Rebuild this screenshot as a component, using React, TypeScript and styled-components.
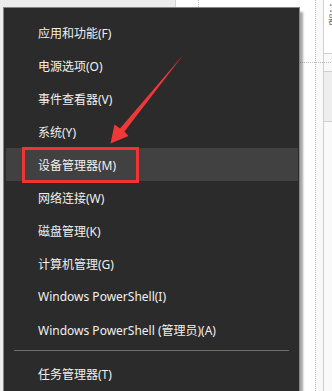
import React from "react";
import styled, { createGlobalStyle } from "styled-components";

const Global = createGlobalStyle`
  html, body { margin: 0; padding: 0; }
  body { width: 332px; height: 391px; overflow: hidden; background: #ffffff; }
`;

const Page = styled.div`
  position: relative;
  width: 332px;
  height: 391px;
  overflow: hidden;
  font-family: "Noto Sans", "Noto Sans CJK SC", sans-serif;
`;

const Backdrop = styled.div`
  display: flex;
  height: 100%;
`;

const LeftPane = styled.div`
  width: 175px;
  flex: none;
  background: #ececec;
  border-right: 1px solid #d6d6d6;
`;

const MidPane = styled.div`
  width: 147px;
  flex: none;
  display: flex;
  background: #ffffff;
`;

const Gutter = styled.div<{ $w: number; $dotted?: boolean; $bg?: string }>`
  width: ${(p) => p.$w}px;
  flex: none;
  background: ${(p) => p.$bg || "transparent"};
  border-left: ${(p) => (p.$dotted ? "1px dotted #b8b8b8" : "none")};
`;

const HDots = styled.div`
  height: 62px;
  border-bottom: 1px dotted #b8b8b8;
`;

const RightPane = styled.div`
  flex: 1;
  display: flex;
  flex-direction: column;
  position: relative;
  background: #f9f9f9;
  border-left: 1px solid #cfcfcf;
`;

const TopBox = styled.div`
  height: 54px;
  background: #ffffff;
  border-bottom: 1px solid #cfcfcf;
  display: flex;
  flex-direction: column;
  padding: 1px 0 0 4px;
  box-sizing: border-box;
  font-family: "Noto Sans CJK SC", sans-serif;
  font-size: 11px;
  line-height: 12px;
  color: #777;
  overflow: hidden;
  white-space: nowrap;
`;

const BoxGap = styled.div`
  height: 17px;
  display: flex;
  flex-direction: column;
  justify-content: center;
`;

const Dots = styled.div`
  border-top: 1px dotted #b8b8b8;
`;

const GreyBox = styled.div`
  height: 49px;
  background: #eeeeee;
  border-top: 1px solid #cfcfcf;
  border-bottom: 1px solid #cfcfcf;
`;

const Menu = styled.div`
  position: absolute;
  left: 3px;
  top: 7px;
  width: 297px;
  height: 400px;
  background: #2b2b2b;
  border: 1px solid #858585;
  box-shadow: 3px 5px 2px rgba(0, 0, 0, 0.35);
  padding: 8px 0 0;
  box-sizing: border-box;
  display: flex;
  flex-direction: column;
`;

const Item = styled.div<{ $active?: boolean }>`
  position: relative;
  height: 33px;
  margin: 0 1px 0 2px;
  padding-left: 32px;
  display: flex;
  align-items: center;
  font-size: 12px;
  color: #f0f0f0;
  background: ${(p) => (p.$active ? "#414141" : "transparent")};
  white-space: nowrap;
`;

const Separator = styled.div`
  height: 1px;
  margin: 4px 10px 6px 10px;
  background: #6e6e6e;
`;

const Highlight = styled.div`
  position: absolute;
  left: 16px;
  top: -1px;
  width: 117px;
  height: 36px;
  border: 3px solid #ee3434;
  box-sizing: border-box;
`;

const ArrowSvg = styled.svg`
  position: absolute;
  left: 0;
  top: 0;
  pointer-events: none;
`;

const items = [
  "应用和功能(F)",
  "电源选项(O)",
  "事件查看器(V)",
  "系统(Y)",
  "设备管理器(M)",
  "网络连接(W)",
  "磁盘管理(K)",
  "计算机管理(G)",
  "Windows PowerShell(I)",
  "Windows PowerShell (管理员)(A)",
];

export default function App() {
  return (
    <Page>
      <Global />
      <Backdrop>
        <LeftPane />
        <MidPane>
          <Gutter $w={22} />
          <Gutter $w={116} $dotted>
            <HDots />
          </Gutter>
          <Gutter $w={9} $dotted $bg="#f9f9f9">
            <HDots />
          </Gutter>
        </MidPane>
        <RightPane>
          <TopBox>
            <span>：</span>
            <span>器</span>
          </TopBox>
          <BoxGap>
            <Dots />
          </BoxGap>
          <GreyBox />
        </RightPane>
      </Backdrop>
      <Menu>
        {items.map((t, i) => (
          <Item key={t} $active={i === 4}>
            {t}
            {i === 4 && <Highlight />}
          </Item>
        ))}
        <Separator />
        <Item>任务管理器(T)</Item>
      </Menu>
      <ArrowSvg width="332" height="391" viewBox="0 0 332 391">
        <polygon
          points="183.5,54.5 124.5,131.5 128.5,136 110.5,143.5 114.5,124.5 120,128.5"
          fill="#f03838"
        />
      </ArrowSvg>
    </Page>
  );
}
